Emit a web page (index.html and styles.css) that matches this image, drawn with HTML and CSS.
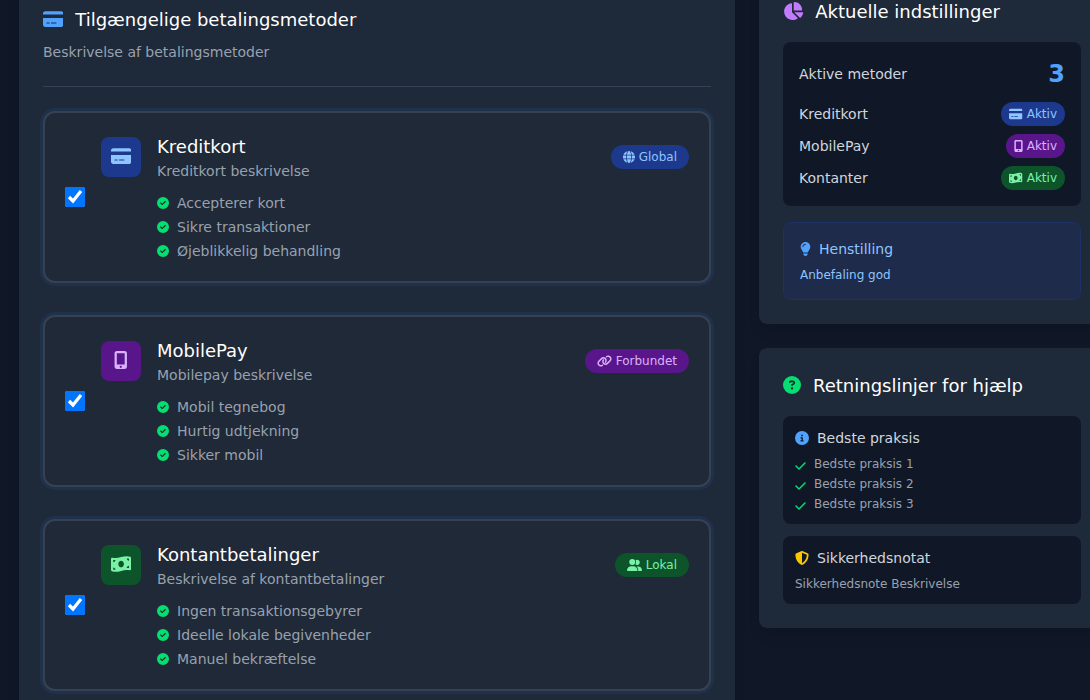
FILE: index.html
```html
<!DOCTYPE html>
<html lang="da">
<head>
<meta charset="utf-8">
<title>Betalingsmetoder</title>
<link rel="stylesheet" href="styles.css">
</head>
<body>
<svg class="sprite" aria-hidden="true">
  <symbol id="card" viewBox="0 0 576 512"><path d="M64 32C28.7 32 0 60.7 0 96l0 32 576 0 0-32c0-35.3-28.7-64-64-64L64 32zM576 224L0 224 0 416c0 35.3 28.7 64 64 64l448 0c35.3 0 64-28.7 64-64l0-192zM112 352l64 0c8.8 0 16 7.2 16 16s-7.2 16-16 16l-64 0c-8.8 0-16-7.2-16-16s7.2-16 16-16zm112 16c0-8.8 7.2-16 16-16l128 0c8.8 0 16 7.2 16 16s-7.2 16-16 16l-128 0c-8.8 0-16-7.2-16-16z"/></symbol>
  <symbol id="circle-check" viewBox="0 0 512 512"><path d="M256 512A256 256 0 1 0 256 0a256 256 0 1 0 0 512zM369 209L241 337c-9.4 9.4-24.6 9.4-33.9 0l-64-64c-9.4-9.4-9.4-24.6 0-33.9s24.6-9.4 33.9 0l47 47L335 175c9.4-9.4 24.6-9.4 33.9 0s9.4 24.6 0 33.9z"/></symbol>
  <symbol id="pie" viewBox="0 0 576 512"><path d="M304 240l0-223.4c0-9 7-16.6 16-16.6C443.7 0 544 100.3 544 224c0 9-7.6 16-16.6 16L304 240zM32 272C32 150.7 122.1 50.3 239 34.3c9.2-1.3 17 6.1 17 15.4L256 288 412.5 444.5c6.7 6.7 6.2 17.7-1.5 23.1C371.8 495.6 323.8 512 272 512C139.5 512 32 404.6 32 272zm526.4 16c9.3 0 16.6 7.8 15.4 17c-7.7 55.9-34.6 105.6-73.9 142.3c-6 5.6-15.4 5.2-21.2-.7L320 288l238.4 0z"/></symbol>
  <symbol id="mobile" viewBox="0 0 384 512"><path d="M16 64C16 28.7 44.7 0 80 0L304 0c35.3 0 64 28.7 64 64l0 384c0 35.3-28.7 64-64 64L80 512c-35.3 0-64-28.7-64-64L16 64zM224 448a32 32 0 1 0 -64 0 32 32 0 1 0 64 0zM304 64L80 64l0 320 224 0 0-320z"/></symbol>
  <symbol id="globe" viewBox="0 0 512 512"><path d="M352 256c0 22.2-1.2 43.6-3.3 64l-185.3 0c-2.2-20.4-3.3-41.8-3.3-64s1.2-43.6 3.3-64l185.3 0c2.2 20.4 3.3 41.8 3.3 64zm28.8-64l123.1 0c5.3 20.5 8.1 41.9 8.1 64s-2.8 43.5-8.1 64l-123.1 0c2.1-20.6 3.2-42 3.2-64s-1.1-43.4-3.2-64zm112.6-32l-116.7 0c-10-63.9-29.8-117.4-55.3-151.6c78.3 20.7 142 77.5 171.9 151.6zm-149.1 0l-176.6 0c6.1-36.4 15.5-68.6 27-94.7c10.5-23.6 22.2-40.7 33.5-51.5C239.4 3.2 248.7 0 256 0s16.6 3.2 27.8 13.8c11.3 10.8 23 27.9 33.5 51.5c11.6 26 20.9 58.2 27 94.7zm-209 0L18.6 160C48.6 85.9 112.2 29.1 190.6 8.4C165.1 42.6 145.3 96.1 135.3 160zM8.1 192l123.1 0c-2.1 20.6-3.2 42-3.2 64s1.1 43.4 3.2 64L8.1 320C2.8 299.5 0 278.1 0 256s2.8-43.5 8.1-64zM194.7 446.6c-11.6-26-20.9-58.2-27-94.6l176.6 0c-6.1 36.4-15.5 68.6-27 94.6c-10.5 23.6-22.2 40.7-33.5 51.5C272.6 508.8 263.3 512 256 512s-16.6-3.2-27.8-13.8c-11.3-10.8-23-27.9-33.5-51.5zM135.3 352c10 63.9 29.8 117.4 55.3 151.6C112.2 482.9 48.6 426.1 18.6 352l116.7 0zm358.1 0c-30 74.1-93.6 130.9-171.9 151.6c25.5-34.2 45.2-87.7 55.3-151.6l116.7 0z"/></symbol>
  <symbol id="link" viewBox="0 0 640 512"><path d="M579.8 267.7c56.5-56.5 56.5-148 0-204.5c-50-50-128.8-56.5-186.3-15.4l-1.6 1.1c-14.4 10.3-17.7 30.3-7.4 44.6s30.3 17.7 44.6 7.4l1.6-1.1c32.1-22.9 76-19.3 103.8 8.6c31.5 31.5 31.5 82.5 0 114L422.3 334.8c-31.5 31.5-82.5 31.5-114 0c-27.9-27.9-31.5-71.8-8.6-103.8l1.1-1.6c10.3-14.4 6.9-34.4-7.4-44.6s-34.4-6.9-44.6 7.4l-1.1 1.6C206.5 251.2 213 330 263 380c56.5 56.5 148 56.5 204.5 0L579.8 267.7zM60.2 244.3c-56.5 56.5-56.5 148 0 204.5c50 50 128.8 56.5 186.3 15.4l1.6-1.1c14.4-10.3 17.7-30.3 7.4-44.6s-30.3-17.7-44.6-7.4l-1.6 1.1c-32.1 22.9-76 19.3-103.8-8.6C74 372 74 321 105.5 289.5L217.7 177.2c31.5-31.5 82.5-31.5 114 0c27.9 27.9 31.5 71.8 8.6 103.9l-1.1 1.6c-10.3 14.4-6.9 34.4 7.4 44.6s34.4 6.9 44.6-7.4l1.1-1.6C433.5 260.8 427 182 377 132c-56.5-56.5-148-56.5-204.5 0L60.2 244.3z"/></symbol>
  <symbol id="users" viewBox="0 0 640 512"><path d="M96 128a128 128 0 1 1 256 0A128 128 0 1 1 96 128zM0 482.3C0 383.8 79.8 304 178.3 304l91.4 0C368.2 304 448 383.8 448 482.3c0 16.4-13.3 29.7-29.7 29.7L29.7 512C13.3 512 0 498.7 0 482.3zM609.3 512l-137.8 0c5.4-9.4 8.6-20.3 8.6-32l0-8c0-60.7-27.1-115.2-69.8-151.8c2.4-.1 4.7-.2 7.1-.2l61.4 0C567.8 320 640 392.2 640 481.3c0 17-13.8 30.7-30.7 30.7zM432 256c-31 0-59-12.6-79.3-32.9C372.4 196.5 384 163.6 384 128c0-26.8-6.6-52.1-18.3-74.3C384.3 40.1 407.2 32 432 32c61.9 0 112 50.1 112 112s-50.1 112-112 112z"/></symbol>
  <symbol id="cash" viewBox="0 0 576 512"><path d="M0 112.5V422.3c0 18 10.1 35 27 41.3c87 32.5 174 10.3 261-11.9c79.8-20.3 159.6-40.7 239.3-18.9c23 6.3 48.7-9.5 48.7-33.4V89.7c0-18-10.1-35-27-41.3C462 15.9 375 38.1 288 60.3C208.2 80.6 128.4 100.9 48.7 79.1C25.6 72.8 0 88.6 0 112.5zM288 352c-44.2 0-80-43-80-96s35.8-96 80-96s80 43 80 96s-35.8 96-80 96zM64 352c35.3 0 64 28.7 64 64H64V352zm64-208c0 35.3-28.7 64-64 64V144h64zM512 304v64H448c0-35.3 28.7-64 64-64zM448 96h64v64c-35.3 0-64-28.7-64-64z"/></symbol>
  <symbol id="bulb" viewBox="0 0 384 512"><path d="M272 384c9.6-31.9 29.5-59.1 49.2-86.2c5.2-7.1 10.4-14.2 15.4-21.4c19.8-28.5 31.4-63 31.4-100.3C368 78.8 289.2 0 192 0S16 78.8 16 176c0 37.3 11.6 71.9 31.4 100.3c5 7.2 10.2 14.3 15.4 21.4c19.8 27.1 39.7 54.4 49.2 86.2l160 0zM192 512c44.2 0 80-35.8 80-80l0-16-160 0 0 16c0 44.2 35.8 80 80 80zM112 176c0 8.8-7.2 16-16 16s-16-7.2-16-16c0-61.9 50.1-112 112-112c8.8 0 16 7.2 16 16s-7.2 16-16 16c-44.2 0-80 35.8-80 80z"/></symbol>
  <symbol id="question" viewBox="0 0 512 512"><path d="M256 512A256 256 0 1 0 256 0a256 256 0 1 0 0 512zM169.8 165.3c7.9-22.3 29.1-37.3 52.8-37.3l58.3 0c34.9 0 63.1 28.3 63.1 63.1c0 22.6-12.1 43.5-31.7 54.8L280 264.4c-.2 13-10.9 23.6-24 23.6c-13.3 0-24-10.7-24-24l0-13.5c0-8.6 4.6-16.5 12.1-20.8l44.3-25.4c4.7-2.7 7.6-7.7 7.6-13.1c0-8.4-6.8-15.1-15.1-15.1l-58.3 0c-3.4 0-6.4 2.1-7.5 5.3l-.4 1.2c-4.4 12.5-18.2 19-30.6 14.6s-19-18.2-14.6-30.6l.4-1.2zM224 352a32 32 0 1 1 64 0 32 32 0 1 1 -64 0z"/></symbol>
  <symbol id="info" viewBox="0 0 512 512"><path d="M256 512A256 256 0 1 0 256 0a256 256 0 1 0 0 512zM216 336l24 0 0-64-24 0c-13.3 0-24-10.7-24-24s10.7-24 24-24l48 0c13.3 0 24 10.7 24 24l0 88 8 0c13.3 0 24 10.7 24 24s-10.7 24-24 24l-80 0c-13.3 0-24-10.7-24-24s10.7-24 24-24zm40-208a32 32 0 1 1 0 64 32 32 0 1 1 0-64z"/></symbol>
  <symbol id="check" viewBox="0 0 448 512"><path d="M438.6 105.4c12.5 12.5 12.5 32.8 0 45.3l-256 256c-12.5 12.5-32.8 12.5-45.3 0l-128-128c-12.5-12.5-12.5-32.8 0-45.3s32.8-12.5 45.3 0L160 338.7 393.4 105.4c12.5-12.5 32.8-12.5 45.3 0z"/></symbol>
  <symbol id="shield" viewBox="0 0 512 512"><path d="M256 0c4.6 0 9.2 1 13.4 2.9L457.7 82.8c22 9.3 38.4 31 38.3 57.2c-.5 99.2-41.3 280.7-213.6 363.2c-16.7 8-36.1 8-52.8 0C57.3 420.7 16.5 239.2 16 140c-.1-26.2 16.3-47.9 38.3-57.2L242.7 2.9C246.8 1 251.4 0 256 0zm0 66.8l0 378.1C394 378 431.1 230.1 432 141.4L256 66.8s0 0 0 0z"/></symbol>
</svg>

<div class="page">
  <main class="panel methods">
    <header class="methods-head">
      <h2 class="title"><svg class="icon w-576 c-blue"><use href="#card"/></svg>Tilgængelige betalingsmetoder</h2>
      <p class="lead">Beskrivelse af betalingsmetoder</p>
    </header>
    <div class="method-list">
      <label class="method">
        <input class="method-check" type="checkbox" checked>
        <div class="method-body">
          <div class="method-head">
            <span class="tile blue"><svg class="icon w-576"><use href="#card"/></svg></span>
            <div class="method-text"><h3 class="method-name">Kreditkort</h3><p class="method-desc">Kreditkort beskrivelse</p></div>
            <span class="badge blue"><svg class="icon"><use href="#globe"/></svg>Global</span>
          </div>
          <ul class="features">
            <li class="feature"><svg class="icon c-green"><use href="#circle-check"/></svg>Accepterer kort</li>
            <li class="feature"><svg class="icon c-green"><use href="#circle-check"/></svg>Sikre transaktioner</li>
            <li class="feature"><svg class="icon c-green"><use href="#circle-check"/></svg>Øjeblikkelig behandling</li>
          </ul>
        </div>
      </label>
      <label class="method">
        <input class="method-check" type="checkbox" checked>
        <div class="method-body">
          <div class="method-head">
            <span class="tile purple"><svg class="icon w-384"><use href="#mobile"/></svg></span>
            <div class="method-text"><h3 class="method-name">MobilePay</h3><p class="method-desc">Mobilepay beskrivelse</p></div>
            <span class="badge purple"><svg class="icon w-640"><use href="#link"/></svg>Forbundet</span>
          </div>
          <ul class="features">
            <li class="feature"><svg class="icon c-green"><use href="#circle-check"/></svg>Mobil tegnebog</li>
            <li class="feature"><svg class="icon c-green"><use href="#circle-check"/></svg>Hurtig udtjekning</li>
            <li class="feature"><svg class="icon c-green"><use href="#circle-check"/></svg>Sikker mobil</li>
          </ul>
        </div>
      </label>
      <label class="method">
        <input class="method-check" type="checkbox" checked>
        <div class="method-body">
          <div class="method-head">
            <span class="tile green"><svg class="icon w-576"><use href="#cash"/></svg></span>
            <div class="method-text"><h3 class="method-name">Kontantbetalinger</h3><p class="method-desc">Beskrivelse af kontantbetalinger</p></div>
            <span class="badge green"><svg class="icon w-640"><use href="#users"/></svg>Lokal</span>
          </div>
          <ul class="features">
            <li class="feature"><svg class="icon c-green"><use href="#circle-check"/></svg>Ingen transaktionsgebyrer</li>
            <li class="feature"><svg class="icon c-green"><use href="#circle-check"/></svg>Ideelle lokale begivenheder</li>
            <li class="feature"><svg class="icon c-green"><use href="#circle-check"/></svg>Manuel bekræftelse</li>
          </ul>
        </div>
      </label>
    </div>
  </main>

  <aside class="sidebar">
    <section class="panel">
      <h2 class="title"><svg class="icon w-576 c-purple"><use href="#pie"/></svg>Aktuelle indstillinger</h2>
      <div class="box summary">
        <div class="row total"><span>Aktive metoder</span><strong class="count">3</strong></div>
        <div class="row"><span>Kreditkort</span><span class="badge small blue"><svg class="icon w-576"><use href="#card"/></svg>Aktiv</span></div>
        <div class="row"><span>MobilePay</span><span class="badge small purple"><svg class="icon w-384"><use href="#mobile"/></svg>Aktiv</span></div>
        <div class="row"><span>Kontanter</span><span class="badge small green"><svg class="icon w-576"><use href="#cash"/></svg>Aktiv</span></div>
      </div>
      <div class="tip">
        <h4 class="subtitle"><svg class="icon w-384 c-blue"><use href="#bulb"/></svg>Henstilling</h4>
        <p class="small-text">Anbefaling god</p>
      </div>
    </section>
    <section class="panel">
      <h2 class="title"><svg class="icon c-green"><use href="#question"/></svg>Retningslinjer for hjælp</h2>
      <div class="box note">
        <h4 class="subtitle"><svg class="icon c-blue"><use href="#info"/></svg>Bedste praksis</h4>
        <ul class="practices">
          <li class="practice"><svg class="icon w-448 c-green"><use href="#check"/></svg>Bedste praksis 1</li>
          <li class="practice"><svg class="icon w-448 c-green"><use href="#check"/></svg>Bedste praksis 2</li>
          <li class="practice"><svg class="icon w-448 c-green"><use href="#check"/></svg>Bedste praksis 3</li>
        </ul>
      </div>
      <div class="box note">
        <h4 class="subtitle"><svg class="icon c-yellow"><use href="#shield"/></svg>Sikkerhedsnotat</h4>
        <p class="small-text">Sikkerhedsnote Beskrivelse</p>
      </div>
    </section>
  </aside>
</div>
</body>
</html>
```

FILE: styles.css
```css
*, *::before, *::after { box-sizing: border-box; }

html, body { height: 100%; overflow: hidden; }

body {
  margin: 0;
  background: #101828;
  color: #d1d5dc;
  font: 14px/20px "DejaVu Sans", sans-serif;
}

h2, h3, h4, p, ul { margin: 0; padding: 0; font-weight: 400; }
ul { list-style: none; }

.sprite { display: none; }

.icon { width: 1em; height: 1em; flex: none; fill: currentColor; }
.w-384 { width: 0.75em; }
.w-448 { width: 0.875em; }
.w-576 { width: 1.125em; }
.w-640 { width: 1.25em; }

.c-blue { color: #51a2ff; }
.c-green { color: #05df72; }
.c-purple { color: #c27aff; }
.c-yellow { color: #fdc700; }

.blue { background: #1c398e; color: #8ec5ff; }
.purple { background: #59168b; color: #dab2ff; }
.green { background: #0d542b; color: #7bf1a8; }

.page {
  display: grid;
  grid-template-columns: 716px 346px;
  gap: 24px;
  width: 1086px;
  margin: -26px 0 0 19px;
}

.panel {
  padding: 24px;
  border-radius: 8px;
  background: #1e2939;
  box-shadow: 0 10px 15px -3px rgba(0, 0, 0, 0.1), 0 4px 6px -4px rgba(0, 0, 0, 0.1);
}

.methods { padding-top: 32px; }

.title {
  display: flex;
  align-items: center;
  gap: 12px;
  color: #fff;
  font-size: 18px;
  line-height: 28px;
}
.title .icon, .tile .icon { margin-bottom: 2px; }

.methods-head { padding-bottom: 24px; border-bottom: 1px solid #364153; }
.lead { margin-top: 8px; color: #99a1af; }

.method-list { display: flex; flex-direction: column; gap: 32px; padding-top: 24px; }

.method {
  display: flex;
  align-items: center;
  gap: 16px;
  padding: 20px;
  border: 2px solid #364153;
  border-radius: 12px;
  background: #1f2937;
  box-shadow: 0 0 0 3px rgba(59, 130, 246, 0.1);
}

.method-check { width: 20px; height: 20px; margin: 0; flex: none; }
.method-body { flex: 1; }
.method-head { display: flex; align-items: center; gap: 16px; }
.method-text { flex: 1; }
.method-name { color: #fff; font-size: 18px; line-height: 28px; }
.method-desc { color: #99a1af; }

.tile {
  display: flex;
  align-items: center;
  justify-content: center;
  width: 40px;
  height: 40px;
  border-radius: 8px;
  font-size: 18px;
}

.badge {
  display: inline-flex;
  align-items: center;
  gap: 4px;
  padding: 4px 12px;
  border-radius: 12px;
  font-size: 12px;
  line-height: 16px;
}
.badge .icon { margin-bottom: 1px; }
.badge.small { padding: 4px 8px; }

.features {
  display: flex;
  flex-direction: column;
  gap: 4px;
  margin: 12px 0 0 56px;
  color: #99a1af;
}
.feature { display: flex; align-items: center; gap: 8px; }
.feature .icon { font-size: 12px; }

.sidebar { display: flex; flex-direction: column; gap: 24px; }

.box { border-radius: 8px; background: #101828; }
.summary { display: flex; flex-direction: column; gap: 8px; margin-top: 16px; padding: 16px; }
.row { display: flex; align-items: center; justify-content: space-between; }
.total { margin-bottom: 4px; }
.count { color: #51a2ff; font-size: 24px; line-height: 32px; font-weight: 700; }

.tip {
  margin-top: 16px;
  padding: 16px;
  border: 1px solid #1d3068;
  border-radius: 8px;
  background: #1e2b4a;
  color: #8ec5ff;
}
.tip .icon { width: 11px; }

.subtitle { display: flex; align-items: center; gap: 8px; margin-bottom: 8px; font-size: 14px; line-height: 20px; }
.small-text { font-size: 12px; line-height: 16px; }

.note { margin-top: 12px; padding: 12px; }
.title + .note { margin-top: 16px; }
.note .small-text { color: #99a1af; }

.practices { display: flex; flex-direction: column; gap: 4px; color: #99a1af; font-size: 12px; line-height: 16px; }
.practice { display: flex; align-items: flex-start; gap: 8px; }
.practice .icon { width: 11px; margin-top: 4px; }
```
